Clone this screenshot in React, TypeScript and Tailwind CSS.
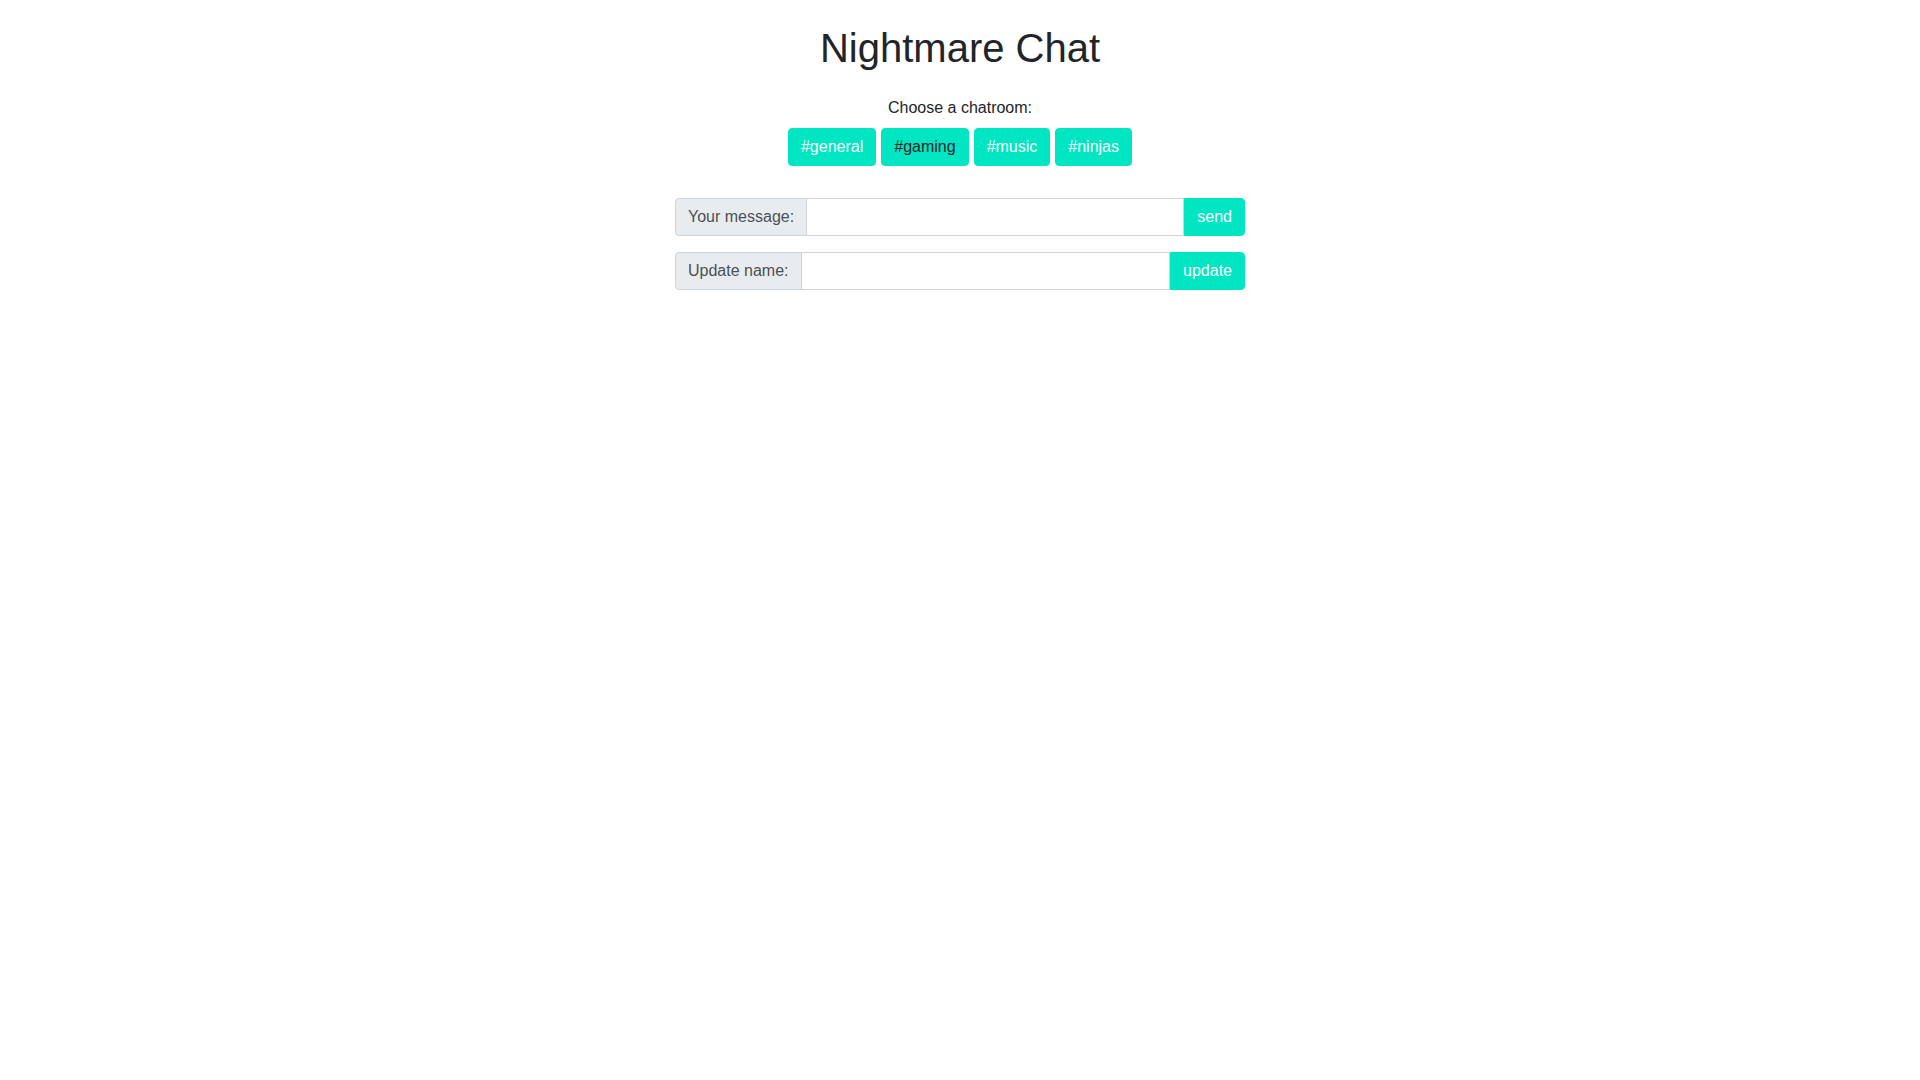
import React from 'react';

const rooms = [
  { name: '#general', active: false },
  { name: '#gaming', active: true },
  { name: '#music', active: false },
  { name: '#ninjas', active: false },
];

const InputRow = ({ label, button }: { label: string; button: string }) => (
  <div className="flex w-[570px] mx-auto h-[38px] text-[16px]">
    <span className="flex items-center px-3 bg-[#e9ecef] text-[#495057] border border-[#ced4da] rounded-l-[4px]">
      {label}
    </span>
    <input type="text" className="flex-1 min-w-0 border border-l-0 border-[#ced4da] px-3 outline-none" />
    <button className="px-3 bg-[#00e6c3] text-white rounded-r-[4px] border border-[#00e6c3]">{button}</button>
  </div>
);

export default function App() {
  return (
    <div className="min-h-screen bg-white text-[#212529] font-['Liberation_Sans',Arial,sans-serif] text-[16px]">
      <h1 className="text-center text-[40px] leading-[48px] pt-6 mb-[24px]">Nightmare Chat</h1>
      <p className="text-center leading-6">Choose a chatroom:</p>
      <div className="flex justify-center gap-[5px] mt-[8px]">
        {rooms.map((r) => (
          <button
            key={r.name}
            className={`h-[38px] px-3 rounded-[4px] bg-[#00e6c3] border border-[#00e6c3] leading-6 ${r.active ? 'text-[#212529]' : 'text-white'}`}
          >
            {r.name}
          </button>
        ))}
      </div>
      <div className="mt-8 flex flex-col gap-4">
        <InputRow label="Your message:" button="send" />
        <InputRow label="Update name:" button="update" />
      </div>
    </div>
  );
}
